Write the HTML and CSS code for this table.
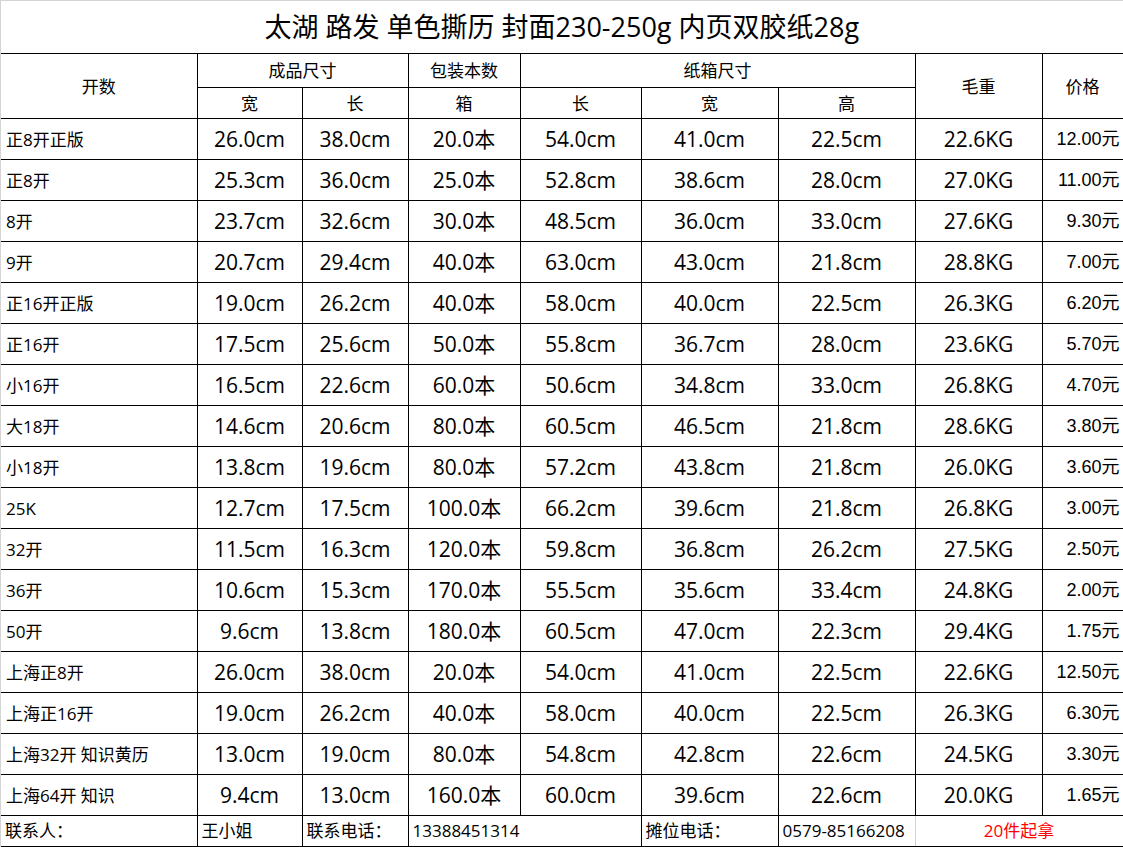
FILE: index.html
```html
<!DOCTYPE html>
<html lang="zh">
<head>
<meta charset="utf-8">
<title>太湖 路发 单色撕历</title>
<link rel="stylesheet" href="styles.css">
</head>
<body>
<div class="sheet">
<table class="grid">
<colgroup>
<col class="c1"><col class="c2"><col class="c3"><col class="c4"><col class="c5"><col class="c6"><col class="c7"><col class="c8"><col class="c9">
</colgroup>
<tbody>
<tr class="r-title"><td class="title first" colspan="9">太湖 路发 单色撕历 封面230-250g 内页双胶纸28g</td></tr>
<tr class="r-h1">
<td class="hd first" rowspan="2">开数</td>
<td class="hd" colspan="2">成品尺寸</td>
<td class="hd">包装本数</td>
<td class="hd" colspan="3">纸箱尺寸</td>
<td class="hd" rowspan="2">毛重</td>
<td class="hd" rowspan="2">价格</td>
</tr>
<tr class="r-h2">
<td class="hd">宽</td><td class="hd">长</td><td class="hd">箱</td><td class="hd">长</td><td class="hd">宽</td><td class="hd">高</td>
</tr>
<tr class="row"><td class="lbl first">正8开正版</td><td class="num">26.0cm</td><td class="num">38.0cm</td><td class="num">20.0本</td><td class="num">54.0cm</td><td class="num">41.0cm</td><td class="num">22.5cm</td><td class="num">22.6KG</td><td class="price">12.00元</td></tr>
<tr class="row"><td class="lbl first">正8开</td><td class="num">25.3cm</td><td class="num">36.0cm</td><td class="num">25.0本</td><td class="num">52.8cm</td><td class="num">38.6cm</td><td class="num">28.0cm</td><td class="num">27.0KG</td><td class="price">11.00元</td></tr>
<tr class="row"><td class="lbl first">8开</td><td class="num">23.7cm</td><td class="num">32.6cm</td><td class="num">30.0本</td><td class="num">48.5cm</td><td class="num">36.0cm</td><td class="num">33.0cm</td><td class="num">27.6KG</td><td class="price">9.30元</td></tr>
<tr class="row"><td class="lbl first">9开</td><td class="num">20.7cm</td><td class="num">29.4cm</td><td class="num">40.0本</td><td class="num">63.0cm</td><td class="num">43.0cm</td><td class="num">21.8cm</td><td class="num">28.8KG</td><td class="price">7.00元</td></tr>
<tr class="row"><td class="lbl first">正16开正版</td><td class="num">19.0cm</td><td class="num">26.2cm</td><td class="num">40.0本</td><td class="num">58.0cm</td><td class="num">40.0cm</td><td class="num">22.5cm</td><td class="num">26.3KG</td><td class="price">6.20元</td></tr>
<tr class="row"><td class="lbl first">正16开</td><td class="num">17.5cm</td><td class="num">25.6cm</td><td class="num">50.0本</td><td class="num">55.8cm</td><td class="num">36.7cm</td><td class="num">28.0cm</td><td class="num">23.6KG</td><td class="price">5.70元</td></tr>
<tr class="row"><td class="lbl first">小16开</td><td class="num">16.5cm</td><td class="num">22.6cm</td><td class="num">60.0本</td><td class="num">50.6cm</td><td class="num">34.8cm</td><td class="num">33.0cm</td><td class="num">26.8KG</td><td class="price">4.70元</td></tr>
<tr class="row"><td class="lbl first">大18开</td><td class="num">14.6cm</td><td class="num">20.6cm</td><td class="num">80.0本</td><td class="num">60.5cm</td><td class="num">46.5cm</td><td class="num">21.8cm</td><td class="num">28.6KG</td><td class="price">3.80元</td></tr>
<tr class="row"><td class="lbl first">小18开</td><td class="num">13.8cm</td><td class="num">19.6cm</td><td class="num">80.0本</td><td class="num">57.2cm</td><td class="num">43.8cm</td><td class="num">21.8cm</td><td class="num">26.0KG</td><td class="price">3.60元</td></tr>
<tr class="row"><td class="lbl first">25K</td><td class="num">12.7cm</td><td class="num">17.5cm</td><td class="num">100.0本</td><td class="num">66.2cm</td><td class="num">39.6cm</td><td class="num">21.8cm</td><td class="num">26.8KG</td><td class="price">3.00元</td></tr>
<tr class="row"><td class="lbl first">32开</td><td class="num">11.5cm</td><td class="num">16.3cm</td><td class="num">120.0本</td><td class="num">59.8cm</td><td class="num">36.8cm</td><td class="num">26.2cm</td><td class="num">27.5KG</td><td class="price">2.50元</td></tr>
<tr class="row"><td class="lbl first">36开</td><td class="num">10.6cm</td><td class="num">15.3cm</td><td class="num">170.0本</td><td class="num">55.5cm</td><td class="num">35.6cm</td><td class="num">33.4cm</td><td class="num">24.8KG</td><td class="price">2.00元</td></tr>
<tr class="row"><td class="lbl first">50开</td><td class="num">9.6cm</td><td class="num">13.8cm</td><td class="num">180.0本</td><td class="num">60.5cm</td><td class="num">47.0cm</td><td class="num">22.3cm</td><td class="num">29.4KG</td><td class="price">1.75元</td></tr>
<tr class="row"><td class="lbl first">上海正8开</td><td class="num">26.0cm</td><td class="num">38.0cm</td><td class="num">20.0本</td><td class="num">54.0cm</td><td class="num">41.0cm</td><td class="num">22.5cm</td><td class="num">22.6KG</td><td class="price">12.50元</td></tr>
<tr class="row"><td class="lbl first">上海正16开</td><td class="num">19.0cm</td><td class="num">26.2cm</td><td class="num">40.0本</td><td class="num">58.0cm</td><td class="num">40.0cm</td><td class="num">22.5cm</td><td class="num">26.3KG</td><td class="price">6.30元</td></tr>
<tr class="row"><td class="lbl first">上海32开 知识黄历</td><td class="num">13.0cm</td><td class="num">19.0cm</td><td class="num">80.0本</td><td class="num">54.8cm</td><td class="num">42.8cm</td><td class="num">22.6cm</td><td class="num">24.5KG</td><td class="price">3.30元</td></tr>
<tr class="row"><td class="lbl first">上海64开 知识</td><td class="num">9.4cm</td><td class="num">13.0cm</td><td class="num">160.0本</td><td class="num">60.0cm</td><td class="num">39.6cm</td><td class="num">22.6cm</td><td class="num">20.0KG</td><td class="price">1.65元</td></tr>
<tr class="r-foot">
<td class="ft first">联系人：</td>
<td class="ft">王小姐</td>
<td class="ft">联系电话：</td>
<td class="ft tel" colspan="2">13388451314</td>
<td class="ft">摊位电话：</td>
<td class="ft tel soft-right">0579-85166208</td>
<td class="ft note soft-left" colspan="2">20件起拿</td>
</tr>
</tbody>
</table>
</div>
</body>
</html>
```

FILE: styles.css
```css
html, body {
  margin: 0;
  padding: 0;
  background: #ffffff;
}

.sheet {
  width: 1122px;
  border-top: 1px solid #d4d4d4;
  border-left: 1px solid #d4d4d4;
  font-family: "Open Sans", "Noto Sans CJK SC", sans-serif;
  color: #000;
}

.grid {
  border-collapse: collapse;
  table-layout: fixed;
  width: 1122px;
}

.c1 { width: 196px; }
.c2 { width: 105px; }
.c3 { width: 106px; }
.c4 { width: 112px; }
.c5 { width: 121px; }
.c6 { width: 137px; }
.c7 { width: 137px; }
.c8 { width: 127px; }
.c9 { width: 81px; }

.grid td {
  border: 1px solid #000;
  padding: 0;
  white-space: nowrap;
  overflow: hidden;
  vertical-align: middle;
  line-height: 20px;
  box-sizing: border-box;
}

.grid td.first {
  border-left: none;
}

.r-title td {
  border-top: none;
  height: 52px;
  text-align: center;
  font-size: 27px;
  line-height: 30px;
  padding-top: 1px;
}

.r-h1 td { height: 34px; }
.r-h2 td { height: 31px; }

.hd {
  text-align: center;
  font-family: "Noto Sans CJK SC", sans-serif;
  font-size: 17px;
}

.row td { height: 41px; }

.lbl {
  font-size: 17px;
  padding-left: 5px !important;
  padding-top: 3px !important;
  text-align: left;
}

.num {
  text-align: center;
  font-size: 21px;
  padding-top: 1px !important;
}

.price {
  text-align: right;
  font-family: "Liberation Sans", "Noto Sans CJK SC", sans-serif;
  font-size: 18px;
  padding-right: 3px !important;
}

.r-foot td {
  height: 31px;
  font-size: 17px;
  text-align: left;
  padding-left: 4px;
  font-family: "Open Sans", "Noto Sans CJK TC", sans-serif;
}

.r-foot td.note {
  text-align: center;
  color: #ff0000;
  padding-left: 0;
}

.r-foot td.soft-right { border-right-color: #d4d4d4; }
.r-foot td.soft-left { border-left-color: #d4d4d4; }
```
